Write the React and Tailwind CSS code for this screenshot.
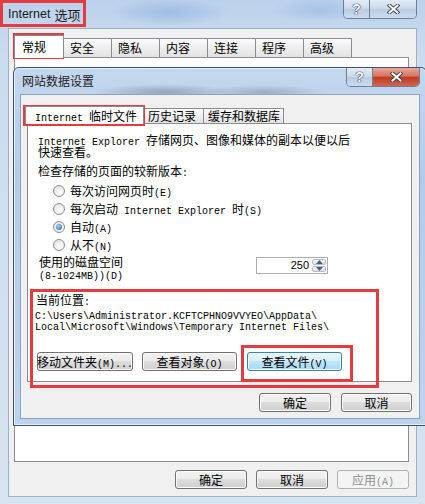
const MONO = "font-['Liberation_Mono',monospace] text-[10px]";
const MONO_INLINE = "font-['Liberation_Mono',monospace] text-[10px] leading-[6px]";

const BTN =
  "flex h-[19px] items-center justify-center whitespace-nowrap rounded-[3px] border border-[#707070] bg-[linear-gradient(#f2f2f2,#ebebeb_45%,#dddddd_50%,#cfcfcf)] shadow-[inset_0_0_0_1px_#fbfbfb] text-[12px] leading-none";

const BTN_FOCUS =
  "flex h-[19px] items-center justify-center whitespace-nowrap rounded-[3px] border border-[#3c7fb1] bg-[linear-gradient(#eaf6fd,#d9f0fc_45%,#bee6fd_50%,#a7d9f5)] shadow-[inset_0_0_0_1px_#f0fafe] text-[12px] leading-none";

const BTN_OFF =
  "flex h-[19px] items-center justify-center whitespace-nowrap rounded-[3px] border border-[#adb2b5] bg-[#f4f4f4] text-[12px] leading-none text-[#8d8d8d]";

// ascii runs use a half-width mono face, like SimSun does
function Mixed({ text }) {
  return text
    .split(/([\x20-\x7e]+)/)
    .filter(Boolean)
    .map((part, i) =>
      /^[\x20-\x7e]+$/.test(part) ? (
        <span key={i} className={MONO_INLINE}>
          {part}
        </span>
      ) : (
        <span key={i}>{part}</span>
      )
    );
}

function CloseGlyph() {
  return (
    <svg width="13" height="10" viewBox="0 0 13 10">
      <path d="M2.5 1.5 L10.5 8.5 M10.5 1.5 L2.5 8.5" stroke="#36414f" strokeWidth="3.8" strokeLinecap="square" />
      <path d="M2.5 1.5 L10.5 8.5 M10.5 1.5 L2.5 8.5" stroke="#ffffff" strokeWidth="2" strokeLinecap="square" />
    </svg>
  );
}

function HelpGlyph() {
  return (
    <span className="font-['Liberation_Sans'] text-[14px] font-bold leading-none text-white [text-shadow:0_0_1px_#2d3a4a,0_0_1px_#2d3a4a,0_0_1px_#2d3a4a]">
      ?
    </span>
  );
}

function CaptionButtons({ red }) {
  return (
    <div className="flex h-[19px] overflow-hidden rounded-b-[5px] border border-t-0 border-[#6c7f99]">
      <div className="flex w-[26px] items-center justify-center border-r border-[#6c7f99] bg-[linear-gradient(#e3ecf6,#c9d8ea_50%,#b7cbe3_51%,#cbdcee)]">
        <HelpGlyph />
      </div>
      <div
        className={
          red
            ? "flex w-[46px] items-center justify-center bg-[linear-gradient(#e9a99b,#d47561_45%,#c23a24_52%,#d1664f)]"
            : "flex w-[46px] items-center justify-center bg-[linear-gradient(#e3ecf6,#c9d8ea_50%,#b7cbe3_51%,#cbdcee)]"
        }
      >
        <CloseGlyph />
      </div>
    </div>
  );
}

function Radio({ checked, label }) {
  return (
    <div className="ml-[15px] flex h-[18px] items-center">
      <span className="flex h-[12px] w-[12px] items-center justify-center rounded-full border border-[#8e8f8f] bg-[radial-gradient(circle_at_60%_65%,#ffffff,#d9d9d9)]">
        {checked ? (
          <span className="h-[6px] w-[6px] rounded-full bg-[radial-gradient(circle_at_40%_35%,#a9d6f7,#1d5a8c)]" />
        ) : null}
      </span>
      <span className="ml-[5px] leading-[12px]">
        <Mixed text={label} />
      </span>
    </div>
  );
}

function Arrow({ up }) {
  return (
    <svg width="7" height="4" viewBox="0 0 7 4">
      <path d={up ? "M0 4 L3.5 0 L7 4 Z" : "M0 0 L3.5 4 L7 0 Z"} fill="#4d6185" />
    </svg>
  );
}

function SpinBox() {
  return (
    <div className="mt-px flex h-[17px] w-[72px] border border-[#abadb3] bg-white">
      <span className="flex flex-1 items-center justify-end pr-[2px] font-['Liberation_Sans'] text-[11px] leading-none">
        250
      </span>
      <div className="flex w-[16px] flex-col gap-px p-px">
        <div className="flex flex-1 items-center justify-center rounded-[2px] border border-[#b5bcc7] bg-[linear-gradient(#f5f7fa,#dde3ea)]">
          <Arrow up />
        </div>
        <div className="flex flex-1 items-center justify-center rounded-[2px] border border-[#b5bcc7] bg-[linear-gradient(#f5f7fa,#dde3ea)]">
          <Arrow />
        </div>
      </div>
    </div>
  );
}

const outerTabs = ["安全", "隐私", "内容", "连接", "程序", "高级"];

function SiteDataDialog() {
  return (
    <div className="absolute left-[13px] top-[67px] flex h-[359px] w-[414px] flex-col rounded-t-[6px] border border-[#3d526b] bg-[radial-gradient(ellipse_70px_8px_at_150px_24px,#93a6bd,transparent),radial-gradient(ellipse_60px_7px_at_250px_24px,#9aadc3,transparent),linear-gradient(#c3d7ee,#b4cce8_30%,#bed3ec)] shadow-[inset_0_0_0_1px_#e4eef9]">
      <div className="flex h-[26px] items-start justify-between">
        <span className="pl-[8px] pt-[6px] text-[12px] leading-[14px] text-[#1e1e1e]">网站数据设置</span>
        <div className="mr-[6px]">
          <CaptionButtons red />
        </div>
      </div>

      <div className="mx-[6px] flex flex-1 flex-col border border-[#8da2bd] bg-[#f0f0f0] pl-[6px] pr-[7px] pt-[11px] pb-[6px]">
        <div className="flex h-[17px] items-end">
          <div className="relative z-10 -mb-px -ml-[2px] flex h-[18px] w-[119px] items-center border border-b-0 border-[#898c95] bg-white pl-[9px] text-[12px] leading-[12px]">
            <span>
              <Mixed text="Internet 临时文件" />
            </span>
          </div>
          <div className="flex h-[15px] w-[60px] items-center border-r border-t border-[#898c95] bg-[linear-gradient(#fbfbfb,#e2e2e2)] pl-[4px] text-[12px] leading-[12px]">
            历史记录
          </div>
          <div className="flex h-[15px] w-[80px] items-center border-r border-t border-[#898c95] bg-[linear-gradient(#fbfbfb,#e2e2e2)] pl-[4px] text-[12px] leading-[12px]">
            缓存和数据库
          </div>
        </div>

        <div className="h-[259px] border border-[#898c95] bg-white pl-[10px] pt-[10px] text-[12px] leading-[12px]">
          <p>
            <Mixed text="Internet Explorer 存储网页、图像和媒体的副本以便以后" />
            <br />
            快速查看。
          </p>
          <p className="mt-[7px]">
            <Mixed text="检查存储的页面的较新版本:" />
          </p>
          <div className="mt-[5px]">
            <Radio label="每次访问网页时(E)" />
            <Radio label="每次启动 Internet Explorer 时(S)" />
            <Radio checked label="自动(A)" />
            <Radio label="从不(N)" />
          </div>

          <div className="mt-[2px] flex items-start">
            <p className="ml-px w-[217px]">
              使用的磁盘空间
              <br />
              <Mixed text="(8-1024MB))(D)" />
            </p>
            <SpinBox />
          </div>

          <div className="-ml-[2px] mt-[14px]">
            <p>
              <Mixed text="当前位置:" />
            </p>
            <p className={`-ml-px mt-[5px] leading-[11px] ${MONO}`}>
              C:\Users\Administrator.KCFTCPHNO9VVYEO\AppData\
              <br />
              Local\Microsoft\Windows\Temporary Internet Files\
            </p>
          </div>

          <div className="-ml-px mt-[19px] flex">
            <button type="button" className={`w-[96px] ${BTN}`}>
              <span>
                <Mixed text="移动文件夹(M)..." />
              </span>
            </button>
            <button type="button" className={`ml-[9px] w-[95px] ${BTN}`}>
              <span>
                <Mixed text="查看对象(O)" />
              </span>
            </button>
            <button type="button" className={`ml-[10px] w-[95px] ${BTN_FOCUS}`}>
              <span>
                <Mixed text="查看文件(V)" />
              </span>
            </button>
          </div>
        </div>

        <div className="mt-[11px] flex justify-end gap-[10px]">
          <button type="button" className={`w-[72px] ${BTN}`}>
            确定
          </button>
          <button type="button" className={`w-[71px] ${BTN}`}>
            取消
          </button>
        </div>
      </div>
      <div className="h-[6px]" />
    </div>
  );
}

export default function App() {
  return (
    <div className="relative h-[504px] w-[425px] overflow-hidden bg-[radial-gradient(ellipse_60px_14px_at_170px_12px,#9fbde3,transparent),radial-gradient(ellipse_50px_12px_at_320px_10px,#a7c3e6,transparent),linear-gradient(#bcd2ec,#cbdcef_60px,#d7e3ef)] font-['Noto_Sans_CJK_SC','Liberation_Sans',sans-serif] text-black">
      <div className="flex h-full flex-col">
        <div className="flex h-[28px] items-start justify-between">
          <div className="flex h-[27px] items-center pl-[8px] pt-[2px] text-[#1b1b1b]">
            <span className="font-['Liberation_Sans'] text-[12.5px]">Internet</span>
            <span className="ml-[4px] text-[13px] leading-none">选项</span>
          </div>
          <div className="mr-[8px]">
            <CaptionButtons />
          </div>
        </div>

        <div className="mx-[8px] flex flex-1 flex-col border border-[#9fb0c6] bg-[#f0f0f0] pl-[5px] pr-[7px] pt-[6px] pb-[7px]">
          <div className="flex h-[22px] items-end">
            <div className="relative z-10 -mb-px flex h-[23px] w-[50px] items-center border border-b-0 border-[#898c95] bg-white pl-[7px] text-[12px]">
              常规
            </div>
            {outerTabs.map((tab) => (
              <div
                key={tab}
                className="flex h-[19px] w-[48px] items-center border-r border-t border-[#898c95] bg-[linear-gradient(#fbfbfb,#e2e2e2)] pl-[6px] text-[12px]"
              >
                {tab}
              </div>
            ))}
          </div>
          <div className="h-[405px] border border-[#898c95] bg-white" />
          <div className="mt-[8px] flex justify-end gap-[9px]">
            <button type="button" className={`w-[72px] ${BTN}`}>
              确定
            </button>
            <button type="button" className={`w-[72px] ${BTN}`}>
              取消
            </button>
            <button type="button" className={`w-[72px] ${BTN_OFF}`}>
              <span>
                <Mixed text="应用(A)" />
              </span>
            </button>
          </div>
        </div>
        <div className="h-[7px]" />
      </div>

      <SiteDataDialog />

      {/* red annotation boxes */}
      <div className="pointer-events-none absolute left-0 top-0 h-[27px] w-[86px] border-[3px] border-[#e23b40]" />
      <div className="pointer-events-none absolute left-[13px] top-[33px] h-[26px] w-[51px] border-[3px] border-[#e23b40]" />
      <div className="pointer-events-none absolute left-[23px] top-[105px] h-[21px] w-[122px] border-[3px] border-[#e23b40]" />
      <div className="pointer-events-none absolute left-[30px] top-[289px] h-[99px] w-[349px] border-[3px] border-[#e23b40]" />
      <div className="pointer-events-none absolute left-[241px] top-[345px] h-[37px] w-[112px] border-[3px] border-[#e23b40]" />
    </div>
  );
}
